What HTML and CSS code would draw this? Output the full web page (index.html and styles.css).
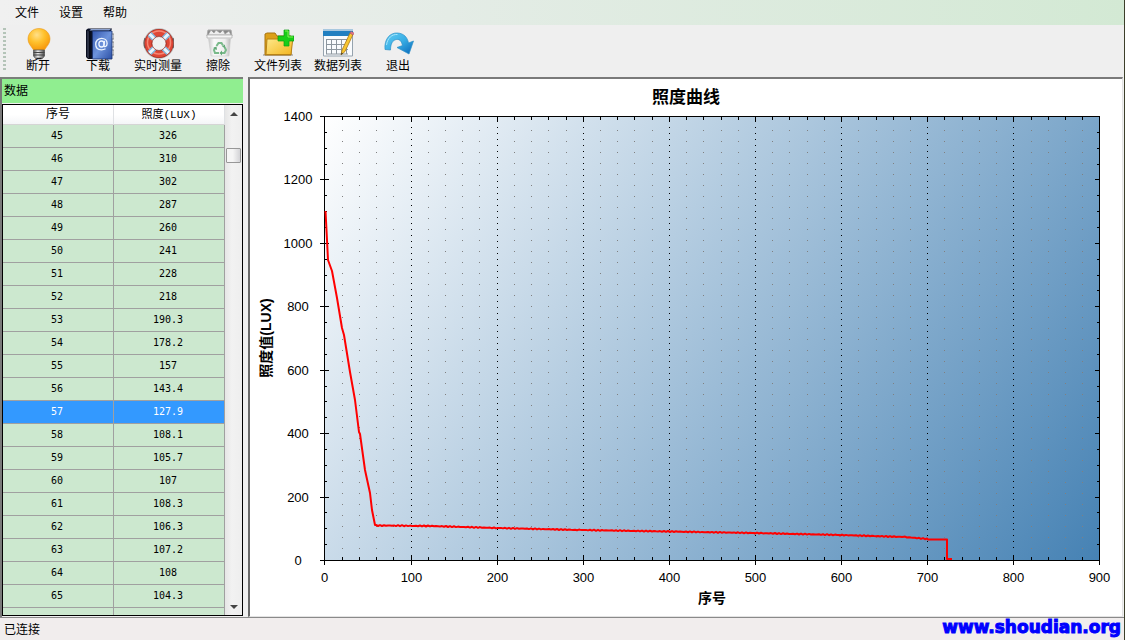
FILE: index.html
```html
<!DOCTYPE html>
<html lang="zh-CN">
<head>
<meta charset="utf-8">
<title>照度曲线</title>
<link rel="stylesheet" href="styles.css">
</head>
<body>
<nav class="menubar">
  <button class="menu-item" type="button">文件</button>
  <button class="menu-item" type="button">设置</button>
  <button class="menu-item" type="button">帮助</button>
</nav>

<div class="toolbar">
  <span class="grip"></span>
  <button class="tool" type="button">
    <svg class="icon" viewBox="0 0 32 32">
      <defs><radialGradient id="bulb" cx=".4" cy=".3" r=".7"><stop offset="0" stop-color="#ffe08a"/><stop offset=".5" stop-color="#ffc12c"/><stop offset="1" stop-color="#f79a0c"/></radialGradient>
      <linearGradient id="metal"><stop offset="0" stop-color="#555"/><stop offset=".4" stop-color="#eee"/><stop offset="1" stop-color="#444"/></linearGradient></defs>
      <path d="M17 .5c-6.500 0-11 4.800-11 10.500 0 4.500 3 7 4.500 9.500.6 1 1 1.500 1.500 1.500h10c.5 0 .9-.5 1.500-1.500 1.500-2.500 4.500-5 4.500-9.500C28 5.300 23.500.5 17 .5z" fill="url(#bulb)" stroke="#e99a1c" stroke-width=".6"/>
      <path d="M11.500 22h11v6l-2 2.500h-7l-2-2.500z" fill="url(#metal)" stroke="#555" stroke-width=".7"/>
      <path d="M11.500 24.500h11M11.500 27h11" stroke="#444"/><path d="M14.500 30.500h5" stroke="#222" stroke-width="1.500"/>
    </svg><span>断开</span></button>
  <button class="tool" type="button">
    <svg class="icon" viewBox="0 0 32 32">
      <defs><linearGradient id="book" x2="1" y2="1"><stop offset="0" stop-color="#3457ae"/><stop offset=".5" stop-color="#6d93dc"/><stop offset="1" stop-color="#2c50a6"/></linearGradient></defs>
      <path d="M28 6h4v5h-4M28 14h4v5h-4M28 22h4v5h-4" fill="#eee" stroke="#777" stroke-width=".8"/>
      <path d="M6 .5h24l-1 2.500v28H6L4 29V2z" fill="#0b1228"/>
      <path d="M9 1h20l-2 1.500H7.500z" fill="#8ba2d0"/>
      <path d="M10.500 3H30v28H10.500z" fill="url(#book)" stroke="#1b326f" stroke-width=".8"/>
      <path d="M5 2v27l2 2V3zM8 3v28" fill="#38405a" stroke="#000" stroke-width=".5"/>
      <g fill="none" stroke="#eef5ff" stroke-width="1.300"><ellipse cx="19.500" cy="16" rx="2.600" ry="3"/><path d="M22.500 12.800l-.6 4.800c0 2 3.200 1.200 3.200-2.200 0-3.200-2.500-5.100-5.400-5.100-3.600 0-6 2.700-6 5.900 0 3.500 2.500 5.600 5.900 5.600 1.600 0 2.800-.4 3.900-1"/></g>
    </svg><span>下载</span></button>
  <button class="tool" type="button">
    <svg class="icon" viewBox="0 0 32 32">
      <circle cx="17" cy="15.500" r="14.600" fill="none" stroke="#b9b9b9" stroke-width="1.500"/>
      <path d="M3 10q-2 5 0 10M31 10q2 5 0 10" fill="none" stroke="#666" stroke-width="1.200"/>
      <circle cx="17" cy="15.500" r="10.800" fill="none" stroke="#9f2b20" stroke-width="7.500"/>
      <circle cx="17" cy="15.500" r="10.800" fill="none" stroke="#df4736" stroke-width="6.300"/>
      <circle cx="17" cy="14.500" r="11.500" fill="none" stroke="#f58774" stroke-width="1.500"/>
      <path d="M7.500 6l5 5M26.500 6l-5 5M7.500 25l5-5M26.500 25l-5-5" stroke="#7fb4da" stroke-width="5.500"/>
      <path d="M7.500 6l5 5M26.500 6l-5 5M7.500 25l5-5M26.500 25l-5-5" stroke="#e7f5fc" stroke-width="3"/>
      <circle cx="17" cy="15.500" r="7" fill="#f0f0f0" stroke="#a33c32" stroke-width=".8"/>
    </svg><span>实时测量</span></button>
  <button class="tool" type="button">
    <svg class="icon" viewBox="0 0 32 32">
      <defs><linearGradient id="bin"><stop offset="0" stop-color="#c7c7c7"/><stop offset=".25" stop-color="#fafafa"/><stop offset=".75" stop-color="#eee"/><stop offset="1" stop-color="#bbb"/></linearGradient></defs>
      <path d="M6 2h23l1 6H5z" fill="#888" stroke="#aaa"/>
      <path d="M6 7l3-5 3 3 2-3 4 3 3-3 2 4 4-3 2 4z" fill="#eee" stroke="#999" stroke-width=".6"/>
      <path d="M5 7h25v3H5z" fill="#f5f5f5" stroke="#aaa" stroke-width=".7"/>
      <path d="M6.500 10.500h22L27 28H9z" fill="url(#bin)" stroke="#ccc" stroke-width=".6"/>
      <g fill="none" stroke="#79b98a" stroke-width="2"><path d="M14.500 18l2-3h3l1.500 2.500M22.500 19l1.500 3-1.500 3h-3M17 25h-4l-1-3 1.500-2.500"/></g>
      <path d="M20 18.500l3-2v3.500zM20 22.500v5l-2.500-2.500zM11 20l3.500-1.500.5 3.500z" fill="#62a977"/>
    </svg><span>擦除</span></button>
  <button class="tool" type="button">
    <svg class="icon" viewBox="0 0 32 32">
      <defs><linearGradient id="folder" x2="1" y2="1"><stop offset="0" stop-color="#ffec91"/><stop offset="1" stop-color="#f3b51e"/></linearGradient></defs>
      <path d="M1 27h30" stroke="#bbb" stroke-width="2"/>
      <path d="M3 27V6l2-1h8l2 3h14v19z" fill="#dda019" stroke="#a87412"/>
      <path d="M5 11h11l2-2h13l-2 17.500H4z" fill="url(#folder)" stroke="#b88317"/>
      <path d="M22 2h5v6h5v5h-5v5h-5v-5h-6V8h6z" fill="#18ce18" stroke="#0b9e15" stroke-width=".7"/>
      <path d="M23 3h3v6h5" fill="none" stroke="#82f052"/>
    </svg><span>文件列表</span></button>
  <button class="tool" type="button">
    <svg class="icon" viewBox="0 0 32 32">
      <path d="M1.500 1.500h29V28h-29z" fill="#f9fbfd" stroke="#96a3ae"/>
      <path d="M1 1h30v7H1z" fill="#217fc0"/><path d="M1 1h30v2H1z" fill="#a8c8df"/>
      <path d="M4.500 12v14M9.500 12v14M14.500 12v14M19.500 12v14M24.500 12v14M4 11.500h22M4 16.500h22M4 21.500h22M4 26h22" stroke="#8c969e"/>
      <path d="M19 27l1-5L28 5l3 1.500-8 17z" fill="#f8c62f" stroke="#a9781c" stroke-width=".8"/>
      <path d="M28 5l1-1.500 3 1.500-1 2z" fill="#e6798c" stroke="#b85266" stroke-width=".6"/><path d="M19 27l.5-2.500 1.500.8z" fill="#333"/>
    </svg><span>数据列表</span></button>
  <button class="tool" type="button">
    <svg class="icon" viewBox="0 0 32 32">
      <defs><linearGradient id="arrow" x2="1" y2="1"><stop offset="0" stop-color="#65cdf3"/><stop offset=".5" stop-color="#38aee5"/><stop offset="1" stop-color="#0866b8"/></linearGradient></defs>
      <path d="M3 21.500C2 11 8 4.500 15.500 5 22 5.400 25.500 9.500 26.500 15l5-2-4.500 13L15 19.500l5.500-2C19.500 13 17.500 11 14.500 11.500 10.500 12 8.500 16 8.500 22z" fill="url(#arrow)" stroke="#2d8fc7" stroke-width=".7"/>
      <path d="M4.500 17C5.500 10 10 6 15.500 6.500" fill="none" stroke="#a5e5fb"/>
    </svg><span>退出</span></button>
</div>

<main class="workspace">
  <section class="data-panel">
    <h2 class="panel-title">数据</h2>
    <div class="grid-box">
      <table class="grid">
        <thead><tr><th>序号</th><th>照度(LUX)</th></tr></thead>
        <tbody>
          <tr><td>45</td><td>326</td></tr>
          <tr><td>46</td><td>310</td></tr>
          <tr><td>47</td><td>302</td></tr>
          <tr><td>48</td><td>287</td></tr>
          <tr><td>49</td><td>260</td></tr>
          <tr><td>50</td><td>241</td></tr>
          <tr><td>51</td><td>228</td></tr>
          <tr><td>52</td><td>218</td></tr>
          <tr><td>53</td><td>190.3</td></tr>
          <tr><td>54</td><td>178.2</td></tr>
          <tr><td>55</td><td>157</td></tr>
          <tr><td>56</td><td>143.4</td></tr>
          <tr class="selected"><td>57</td><td>127.9</td></tr>
          <tr><td>58</td><td>108.1</td></tr>
          <tr><td>59</td><td>105.7</td></tr>
          <tr><td>60</td><td>107</td></tr>
          <tr><td>61</td><td>108.3</td></tr>
          <tr><td>62</td><td>106.3</td></tr>
          <tr><td>63</td><td>107.2</td></tr>
          <tr><td>64</td><td>108</td></tr>
          <tr><td>65</td><td>104.3</td></tr>
          <tr><td></td><td></td></tr>
        </tbody>
      </table>
      <div class="scrollbar">
        <span class="arrow-up"></span>
        <span class="thumb"></span>
        <span class="arrow-down"></span>
      </div>
    </div>
  </section>

  <section class="chart-panel">
    <svg class="chart" viewBox="250 79 872 537" role="img" aria-label="照度曲线">
      <defs>
        <linearGradient id="plot" gradientUnits="userSpaceOnUse" x1="324" y1="116" x2="1049" y2="628">
          <stop offset="0" stop-color="#fff"/><stop offset="1" stop-color="#4682b4"/>
        </linearGradient>
      </defs>
      <rect x="324" y="116" width="776" height="445" fill="url(#plot)"/>
      <g id="grid" shape-rendering="crispEdges"></g>
      <path id="curve" class="curve" d=""/>
      <text class="chart-title" x="686" y="103">照度曲线</text>
      <text class="axis-title" x="712" y="603">序号</text>
      <text class="axis-title" transform="translate(271 338) rotate(-90)">照度值(LUX)</text>
      <g id="labels"></g>
    </svg>
  </section>
</main>

<footer class="statusbar">
  <span>已连接</span>
  <a class="site" href="http://www.shoudian.org">www.shoudian.org</a>
</footer>
<script src="chart.js"></script>
</body>
</html>
```
FILE: styles.css
```css
* { box-sizing: border-box; }

body {
  margin: 0;
  height: 100vh;
  display: flex;
  flex-direction: column;
  overflow: hidden;
  background: #f0f0f0;
  border-right: 1px solid #3c3f2a;
  color: #000;
  font: 12px/16px "Liberation Sans", "Noto Sans CJK SC", sans-serif;
}

button {
  border: 0;
  padding: 0;
  background: none;
  color: inherit;
  font: inherit;
}

.menubar {
  display: flex;
  gap: 20px;
  height: 25px;
  flex: none;
  padding: 0 15px;
  background: linear-gradient(90deg, #f0f0f0, #e4ece6 40%, #d3e9d4);
}

.toolbar {
  display: flex;
  height: 52px;
  flex: none;
  padding-top: 3px;
  background: #efefef;
}

.grip {
  width: 3px;
  height: 44px;
  margin: 0 2px 0 3px;
  background: repeating-linear-gradient(#b4c4b8 0 2px, transparent 2px 4px);
}

.tool {
  width: 60px;
  display: flex;
  flex-direction: column;
  align-items: center;
  justify-content: flex-start;
  white-space: nowrap;
}

.tool span { line-height: 12px; }

.icon { width: 32px; height: 32px; flex: none; }

.workspace {
  flex: 1;
  min-height: 0;
  display: flex;
  gap: 5px;
  padding-right: 1px;
}

.data-panel {
  width: 243px;
  flex: none;
  display: flex;
  flex-direction: column;
  border-top: 2px solid #7a7f7a;
  border-left: 2px solid #7a7a7a;
  padding-bottom: 1px;
}

.panel-title {
  margin: 0 0 1px;
  height: 24px;
  padding: 0 2px;
  background: #90ee90;
  font-size: 12px;
  font-weight: 400;
  line-height: 24px;
}

.grid-box {
  flex: 1;
  min-height: 0;
  display: flex;
  overflow: hidden;
  border: 1px solid #000;
}

.grid {
  width: 222px;
  align-self: flex-start;
  flex: none;
  table-layout: fixed;
  border-collapse: separate;
  border-spacing: 0;
  text-align: center;
}

.grid th, .grid td { padding: 0; }

.grid th {
  height: 20px;
  background: linear-gradient(#fff 50%, #f4f5f7);
  border-right: 1px solid #dfe1e4;
  border-bottom: 1px solid #d5d5d5;
  font: 12px/18px "Liberation Mono", "Noto Sans CJK SC", monospace;
}

.grid th:last-child { font-size: 11px; }

.grid td {
  height: 23px;
  padding-right: 2px;
  background: #cce8cf;
  border-right: 1px solid #a0a0a0;
  border-bottom: 1px solid #a0a0a0;
  font: 10px/22px "DejaVu Sans Mono", monospace;
}

.selected td { background: #3399ff; color: #fff; }

.scrollbar {
  flex: 1;
  display: flex;
  flex-direction: column;
  align-items: center;
  padding: 7px 0 6px;
  background: linear-gradient(90deg, #e6e6e6, #f2f2f2 40%, #eee);
}

.arrow-up, .arrow-down {
  border-left: 4px solid transparent;
  border-right: 4px solid transparent;
}

.arrow-up { border-bottom: 4px solid #444; }
.arrow-down { border-top: 4px solid #444; margin-top: auto; }

.thumb {
  width: 15px;
  height: 15px;
  margin-top: 32px;
  border: 1px solid #979797;
  border-radius: 1px;
  background: linear-gradient(90deg, #f5f5f5 45%, #d3d3d6);
}

.chart-panel {
  flex: 1;
  min-width: 0;
  border-top: 2px solid #7a7a7a;
  border-left: 2px solid #6a6a6a;
  border-right: 1px solid #e3e3e3;
  border-bottom: 1px solid #e3e3e3;
  background: #fff;
}

.chart { display: block; width: 100%; height: 100%; }

.chart text { text-anchor: middle; fill: #000; }

.chart .tick-label { font-size: 13px; }

.chart .chart-title { font-size: 17px; font-weight: 700; }

.chart .axis-title { font-size: 14px; font-weight: 700; }

.curve { fill: none; stroke: #f00; stroke-width: 2; stroke-linejoin: round; }

.line { stroke: #000; fill: none; }
.minor { stroke: #808080; stroke-dasharray: 1 10; fill: none; }
.major { stroke: #000; stroke-dasharray: 1 5; fill: none; }

.statusbar {
  display: flex;
  justify-content: space-between;
  height: 23px;
  flex: none;
  padding: 0 3px 0 4px;
  border-top: 1px solid #8a8a8a;
  background: #f1eded;
  line-height: 24px;
}

.site {
  color: #00f;
  font: 700 17px/18px "DejaVu Sans", sans-serif;
  -webkit-text-stroke: 1px #00f;
  text-decoration: none;
}
```
FILE: chart.js
```js
const NS = 'http://www.w3.org/2000/svg';
const left = 324, right = 1099, top_ = 116, bottom = 560;
const grid = document.getElementById('grid');
const labels = document.getElementById('labels');

function path(d, cls) {
  const p = document.createElementNS(NS, 'path');
  p.setAttribute('d', d);
  p.setAttribute('class', cls);
  grid.appendChild(p);
}

function label(text, x, y) {
  const t = document.createElementNS(NS, 'text');
  t.setAttribute('x', x);
  t.setAttribute('y', y);
  t.setAttribute('class', 'tick-label');
  t.textContent = text;
  labels.appendChild(t);
}

let ticks = `M${left} ${top_ + 0.5}H${right + 1}M${left} ${bottom + 0.5}H${right + 1}`
  + `M${left + 0.5} ${top_}V${bottom}M${right + 0.5} ${top_}V${bottom}`;

for (let i = 0; i <= 45; i++) {
  const x = Math.ceil(left + i * (right - left) / 45) + 0.5;
  const major = i % 5 === 0;
  const len = major ? 5 : 3;
  ticks += `M${x} ${top_}v${len + 1}M${x} ${bottom - len}V${bottom + (major ? 5 : 0)}`;
  if (i > 0 && i < 45) {
    path(major ? `M${x} 127V549` : `M${x} 130V550`, major ? 'major' : 'minor');
  }
  if (major) label(i * 20, x, 582);
}

for (let i = 0; i <= 28; i++) {
  const y = Math.round(bottom - i * (bottom - top_) / 28) + 0.5;
  const major = i % 4 === 0;
  const len = major ? 5 : 3;
  ticks += `M${major ? left - 4 : left} ${y}H${left + len}M${right - len + 1} ${y}H${right}`;
  if (major) label(i * 50, 298, y + 4);
}
path(ticks, 'line');

// Steep drop, then a slow decay with slight measurement noise.
let d = 'M325.500 211L327 240 328 260 332 271 337 298 342 328 344 335 350 372 355 400 359 432 360 434 365 470 370 493 372 510 375 525';
const decay = [[376, 525.5], [430, 526], [497, 528], [580, 530], [640, 531], [755, 533], [840, 535], [905, 537], [928, 539]];
for (let k = 1; k < decay.length; k++) {
  const [x0, y0] = decay[k - 1], [x1, y1] = decay[k];
  for (let x = x0; x < x1; x += 2) {
    const y = y0 + (y1 - y0) * (x - x0) / (x1 - x0) + Math.sin(x * 1.7) * 0.5;
    d += `L${x} ${y.toFixed(1)}`;
  }
}
d += 'L928 539.500H947V559H952';
document.getElementById('curve').setAttribute('d', d);
```
